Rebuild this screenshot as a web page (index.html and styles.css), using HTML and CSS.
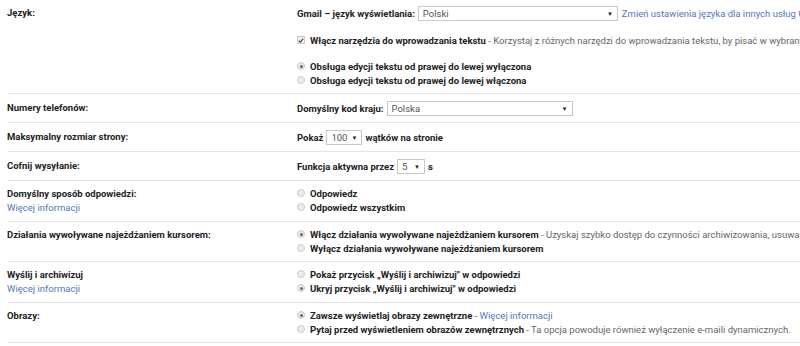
FILE: index.html
```html
<!DOCTYPE html>
<html>
<head>
	<title>Ustawienia</title>
	<link rel="stylesheet" href="styles.css">
</head>
<body>

<div class="settings">

	<div class="row">
		<div class="label">Język:</div>
		<div class="value">
			<div class="line">
				<b>Gmail – język wyświetlania:</b>
				<span class="select wide">Polski<span class="arrow">▼</span></span>
				<a class="link" href="#">Zmień ustawienia języka dla innych usług Google</a>
			</div>
			<div class="line gap">
				<span class="check"><svg width="7" height="7" viewBox="0 0 8 8"><path d="M1 4.2 L3.1 6.2 L7 1.6" fill="none" stroke="#444" stroke-width="1.6"/></svg></span>
				<b>Włącz narzędzia do wprowadzania tekstu</b><span class="desc">&nbsp;- Korzystaj z różnych narzędzi do wprowadzania tekstu, by pisać w wybranym języku.</span>
			</div>
			<div class="line gap"><span class="radio on"></span><b>Obsługa edycji tekstu od prawej do lewej wyłączona</b></div>
			<div class="line"><span class="radio"></span><b>Obsługa edycji tekstu od prawej do lewej włączona</b></div>
		</div>
	</div>

	<div class="row single">
		<div class="label">Numery telefonów:</div>
		<div class="value">
			<div class="line"><b>Domyślny kod kraju:</b> <span class="select country">Polska<span class="arrow">▼</span></span></div>
		</div>
	</div>

	<div class="row single">
		<div class="label">Maksymalny rozmiar strony:</div>
		<div class="value">
			<div class="line"><b>Pokaż</b> <span class="select num">100<span class="arrow">▼</span></span> <b>wątków na stronie</b></div>
		</div>
	</div>

	<div class="row single">
		<div class="label">Cofnij wysyłanie:</div>
		<div class="value">
			<div class="line"><b>Funkcja aktywna przez</b> <span class="select small">5<span class="arrow">▼</span></span> <b>s</b></div>
		</div>
	</div>

	<div class="row">
		<div class="label">Domyślny sposób odpowiedzi:<br><a class="link normal" href="#">Więcej informacji</a></div>
		<div class="value">
			<div class="line"><span class="radio"></span><b>Odpowiedz</b></div>
			<div class="line"><span class="radio"></span><b>Odpowiedz wszystkim</b></div>
		</div>
	</div>

	<div class="row">
		<div class="label">Działania wywoływane najeżdżaniem kursorem:</div>
		<div class="value">
			<div class="line"><span class="radio on"></span><b>Włącz działania wywoływane najeżdżaniem kursorem</b><span class="desc">&nbsp;- Uzyskaj szybko dostęp do czynności archiwizowania, usuwania, oznaczania jako przeczytane i odkładania.</span></div>
			<div class="line"><span class="radio"></span><b>Wyłącz działania wywoływane najeżdżaniem kursorem</b></div>
		</div>
	</div>

	<div class="row">
		<div class="label">Wyślij i archiwizuj<br><a class="link normal" href="#">Więcej informacji</a></div>
		<div class="value">
			<div class="line"><span class="radio"></span><b>Pokaż przycisk „Wyślij i archiwizuj" w odpowiedzi</b></div>
			<div class="line"><span class="radio on"></span><b>Ukryj przycisk „Wyślij i archiwizuj" w odpowiedzi</b></div>
		</div>
	</div>

	<div class="row">
		<div class="label">Obrazy:</div>
		<div class="value">
			<div class="line"><span class="radio on"></span><b>Zawsze wyświetlaj obrazy zewnętrzne</b><span class="desc">&nbsp;-&nbsp;</span><a class="link flat" href="#">Więcej informacji</a></div>
			<div class="line"><span class="radio"></span><b>Pytaj przed wyświetleniem obrazów zewnętrznych</b><span class="desc">&nbsp;- Ta opcja powoduje również wyłączenie e-maili dynamicznych.</span></div>
		</div>
	</div>

</div>

</body>
</html>
```

FILE: styles.css
```css
body { margin: 0; padding: 0; background: #fff; font-family: Roboto, "Noto Sans", sans-serif; font-size: 9.5px; color: #222; overflow: hidden; }

.settings { margin-left: 7px; }

.row { display: grid; grid-template-columns: 290px 1fr; padding: 5px 0 6px; border-bottom: 1px solid #e5e5e5; }
.row.single { padding: 6px 0 6px; }

.label { font-weight: bold; line-height: 14px; padding-top: 1px; }
.value { white-space: nowrap; overflow: hidden; }

.line { display: flex; align-items: center; height: 14px; }
.line > * { flex: none; }
.single .line { height: 16px; }
.row:first-child .line:first-child { height: 16px; }
.gap { margin-top: 12px; }

b { font-weight: bold; color: #222; }
.desc { color: #666; }

.link { color: #5577b6; text-decoration: none; margin-left: 1px; }
.link.normal, .link.flat { margin-left: 0; font-weight: normal; }

.select { display: inline-flex; align-items: center; justify-content: space-between; height: 13px; border: 1px solid #c8c8c8; background: #fff; color: #555; padding: 0 4px; margin: 0 3px; font-size: 9.5px; box-sizing: content-box; }
.select .arrow { font-size: 6px; color: #222; }
.select.wide { width: 190px; margin-left: 3px; }
.select.country { width: 176px; }
.select.num { width: 26px; }
.select.small { width: 18px; }

.radio { width: 8px; height: 8px; border: 1px solid #cacaca; border-radius: 50%; background: #ececec; margin-right: 5px; box-sizing: border-box; display: inline-flex; align-items: center; justify-content: center; }
.radio.on::after { content: ""; width: 3px; height: 3px; border-radius: 50%; background: #666; }

.check { width: 8px; height: 8px; border: 1px solid #cacaca; background: #f0f0f0; margin-right: 5px; box-sizing: border-box; display: inline-flex; align-items: center; justify-content: center; }
```
